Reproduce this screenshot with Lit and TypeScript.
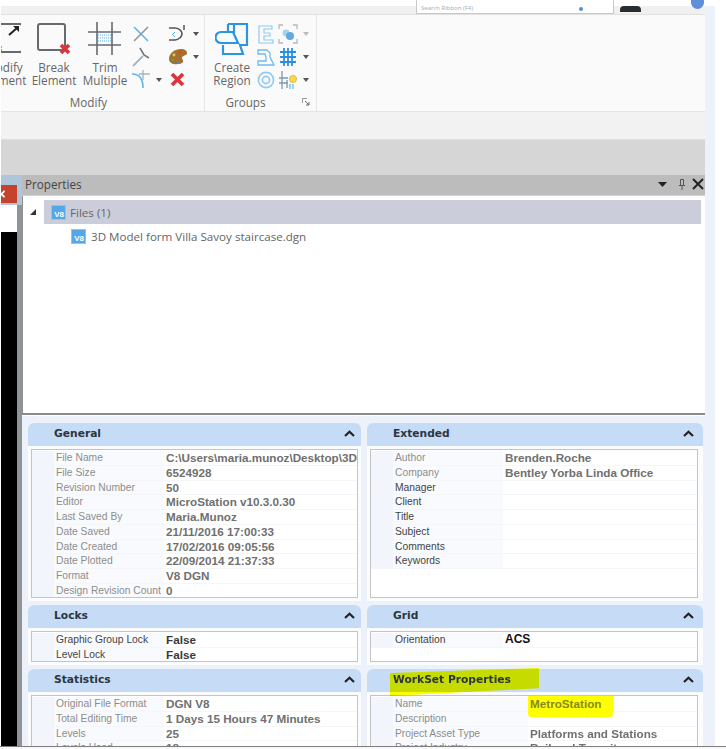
import { LitElement, html, css, svg } from "lit";
import { customElement } from "lit/decorators.js";

const blue = "#5fb4ec";
const gray = "#666b70";
const red = "#d9363e";

const redX = (x: number, y: number, s: number) => svg`<path d="M${x} ${y}l${s} ${s}M${x + s} ${y}l${-s} ${s}" stroke=${red} stroke-width="3.800" fill="none"/>`;

const icons: Record<string, any> = {
  modify: svg`<svg width="33" height="33" viewBox="0 0 33 33"><rect x="9" y="2" width="25" height="28" rx="2" fill="none" stroke=${gray} stroke-width="2"/><path d="M21 13l8-7" stroke="#222" stroke-width="2" fill="none"/><path d="M25 4h6v6z" fill="#222"/><path d="M11 17v14M13 24v6" stroke=${blue} stroke-width="2" stroke-dasharray="2 1" fill="none"/></svg>`,
  brk: svg`<svg width="34" height="34" viewBox="0 0 34 34" overflow="visible"><rect x="1" y="2" width="27" height="26" rx="2" fill="none" stroke=${gray} stroke-width="2"/>${redX(24, 23, 8)}</svg>`,
  trim: svg`<svg width="34" height="34" viewBox="0 0 34 34"><path d="M9 0v33M24 0v33M0 10h33M0 23h33" stroke=${gray} stroke-width="1.6" fill="none"/><path d="M10 13h14M10 16h14M10 19h14" stroke=${blue} stroke-width="1" stroke-dasharray="1 1" fill="none"/></svg>`,
  x: svg`<svg width="20" height="20" viewBox="0 0 20 20"><path d="M3 3l14 14" stroke=${blue} stroke-width="1.6"/><path d="M17 3L3 17" stroke="#8a98a5" stroke-width="1.6"/></svg>`,
  y: svg`<svg width="20" height="20" viewBox="0 0 20 20"><path d="M9 1l4 7 5 3" stroke="#777" stroke-width="1.6" fill="none"/><path d="M12 9L2 19" stroke="#9fb6c8" stroke-width="1.8"/></svg>`,
  curve: svg`<svg width="20" height="20" viewBox="0 0 20 20"><path d="M1 4c7 0 11 4 11 14" stroke=${blue} stroke-width="1.6" fill="none"/><path d="M12 0v10M8 4h11" stroke="#a9b2ba" stroke-width="1.3" fill="none"/></svg>`,
  arc: svg`<svg width="20" height="20" viewBox="0 0 20 20"><path d="M1 4h6c5 0 7 4 7 6s-3 6-7 6H1" stroke="#555" stroke-width="1.6" fill="none"/><path d="M7 8l-3 3M7 13l-3-3" stroke=${blue} stroke-width="1"/><path d="M16 1v5" stroke="#555" stroke-width="1.5"/></svg>`,
  palette: svg`<svg width="20" height="20" viewBox="0 0 20 20"><path d="M1 12C1 6 7 2 13 2c4 0 6 2 6 4 0 3-5 2-5 5 0 2 2 2 1 4-2 3-14 4-14-3z" fill="#a5702e"/><circle cx="12" cy="5" r="1.4" fill="#d8453d"/><circle cx="6" cy="8" r="1.4" fill="#e9c94e"/><circle cx="5" cy="13" r="1.4" fill="#58a45c"/><circle cx="10" cy="15" r="1.3" fill="#4b8ad0"/></svg>`,
  xred: svg`<svg width="20" height="20" viewBox="0 0 20 20">${redX(4, 4, 11)}</svg>`,
  region: svg`<svg width="34" height="34" viewBox="0 0 34 34"><path d="M13 2h19v21h-7l3 9H8v-9" fill="none" stroke="#2b95e2" stroke-width="2.2"/><path d="M19 2v8H6a5 5 0 0 0 0 11h17l-5-11" fill="none" stroke="#2b95e2" stroke-width="2.2"/><path d="M13 2v8" fill="none" stroke="#2b95e2" stroke-width="2.2"/></svg>`,
  g1: svg`<svg width="20" height="20" viewBox="0 0 20 20"><path d="M3 2h13v3H8v4h6v3H8v4h9v3H3z" fill="none" stroke="#8ecbf3" stroke-width="1.2"/></svg>`,
  g2: svg`<svg width="20" height="20" viewBox="0 0 20 20"><path d="M2 3h9l3 3v4l4 8H2v-4h8v-4l-1-3H2z" fill="none" stroke="#6dbcef" stroke-width="1.3"/></svg>`,
  g3: svg`<svg width="20" height="20" viewBox="0 0 20 20"><circle cx="10" cy="10" r="7.6" fill="none" stroke="#8ecbf3" stroke-width="1.6"/><circle cx="10" cy="10" r="3.6" fill="none" stroke="#8ecbf3" stroke-width="1.6"/></svg>`,
  h1: svg`<svg width="20" height="20" viewBox="0 0 20 20"><path d="M1 5V1h4M15 1h4v4M19 15v4h-4M5 19H1v-4" stroke="#b5b8bb" stroke-width="1.3" fill="none"/><circle cx="8" cy="9" r="3.4" fill="#a6d2f2"/><circle cx="12" cy="12" r="4" fill="#62a9e2"/></svg>`,
  h2: svg`<svg width="20" height="20" viewBox="0 0 20 20"><path d="M6 1v18M10 1v18M14 1v18M2 5h16M2 10h16M2 15h16" stroke="#2b8fe0" stroke-width="1.8" fill="none"/></svg>`,
  h3: svg`<svg width="20" height="20" viewBox="0 0 20 20"><path d="M4 1v18M1 8h9M1 13h9M9 10v8" stroke="#7f9aaf" stroke-width="1.3" fill="none"/><path d="M12 14v5M15 14v5" stroke=${blue} stroke-width="1.2"/><circle cx="15" cy="9" r="3.6" fill="#f5d94e" stroke="#c9b13a" stroke-width=".7"/></svg>`,
};

const chevron = svg`<svg class="chev" width="11" height="7" viewBox="0 0 11 7"><path d="M1 6l4.500-4.300L10 6" fill="none" stroke="#222" stroke-width="2.200"/></svg>`;
const caret = (c = "#555") => svg`<svg class="caret" width="6" height="4" viewBox="0 0 6 4"><path d="M0 0h6L3 4z" fill=${c}/></svg>`;

type Row = [string, string, string?];

const general: Row[] = [
  ["File Name", "C:\\Users\\maria.munoz\\Desktop\\3D Model form Villa Savoy staircase.dgn"],
  ["File Size", "6524928"],
  ["Revision Number", "50"],
  ["Editor", "MicroStation v10.3.0.30"],
  ["Last Saved By", "Maria.Munoz"],
  ["Date Saved", "21/11/2016 17:00:33"],
  ["Date Created", "17/02/2016 09:05:56"],
  ["Date Plotted", "22/09/2014 21:37:33"],
  ["Format", "V8 DGN"],
  ["Design Revision Count", "0"],
];
const extended: Row[] = [
  ["Author", "Brenden.Roche"],
  ["Company", "Bentley Yorba Linda Office"],
  ["Manager", "", "ed"],
  ["Client", "", "ed"],
  ["Title", "", "ed"],
  ["Subject", "", "ed"],
  ["Comments", "", "ed"],
  ["Keywords", "", "ed"],
];
const locks: Row[] = [
  ["Graphic Group Lock", "False", "ed"],
  ["Level Lock", "False", "ed"],
];
const grid: Row[] = [["Orientation", "ACS", "ed"]];
const stats: Row[] = [
  ["Original File Format", "DGN V8"],
  ["Total Editing Time", "1 Days 15 Hours 47 Minutes"],
  ["Levels", "25"],
  ["Levels Used", "18"],
];
const workset: Row[] = [
  ["Name", "MetroStation", "mark"],
  ["Description", ""],
  ["Project Asset Type", "Platforms and Stations"],
  ["Project Industry", "Rail and Transit"],
];

@customElement("app-root")
export class AppRoot extends LitElement {
  static styles = css`
    :host { display: block; width: 726px; height: 749px; background: #fff; overflow: hidden; }
    * { box-sizing: border-box; }
    .root { width: 726px; height: 749px; display: flex; flex-direction: column; filter: blur(0.6px); font-family: "Open Sans", sans-serif; }
    .main { height: 746px; display: flex; overflow: hidden; padding-left: 1px; }
    .foot { height: 3px; border-top: 1px solid #7e7e7e; background: #f8f8f8; }
    .app { width: 704px; display: flex; flex-direction: column; flex: none; }
    .strip { width: 10px; margin-top: 6px; background: #edf1f9; flex: none; }

    .top { height: 15px; border-top: 6px solid #fff; border-bottom: 1px solid #e1e1e1; background: #f0f0f0; display: flex; align-items: flex-end; padding-left: 415px; }
    .search { width: 198px; height: 14px; margin-top: -6px; background: #fff; border: 1px solid #c8c8c8; border-top: 0; display: flex; align-items: flex-end; justify-content: space-between; padding: 0 30px 2px 4px; font-size: 6px; line-height: 6px; color: #aaa; white-space: nowrap; }
    .search i { width: 4px; height: 4px; background: #4f93dd; border-radius: 50%; }
    .black { width: 21px; height: 6px; background: #2a2d30; border-radius: 4px 4px 0 0; margin: 0 0 2px 6px; }
    .dot { width: 13px; height: 9px; background: #5f8fdc; border-radius: 0 0 7px 7px; margin: 0 0 5px 50px; }

    .ribbon { height: 97px; background: #fafafa; border-bottom: 1px solid #e4e4e4; display: flex; overflow: hidden; color: #666; }
    .group { display: flex; flex-direction: column; border-right: 1px solid #e6e6e6; flex: none; }
    .g-mod { width: 204px; }
    .g-grp { width: 112px; }
    .tools { flex: 1; display: flex; padding-top: 7px; min-height: 0; }
    .btn { width: 50px; flex: none; display: flex; flex-direction: column; align-items: center; font-size: 11.700px; line-height: 13px; text-align: center; white-space: nowrap; }
    .btn .ic { height: 39px; flex: none; }
    .btn svg { display: block; }
    .first { margin-left: -22px; }
    .col { display: grid; grid-template-rows: repeat(3, 23px); flex: none; }
    .cell { display: flex; align-items: center; gap: 5px; height: 23px; }
    .cell svg { display: block; flex: none; }
    .c1 { width: 37px; margin-left: 1px; }
    .c2 { width: 36px; }
    .c3 { width: 22px; margin-left: -1px; }
    .c4 { width: 30px; }
    .glabel { height: 16px; display: flex; align-items: center; font-size: 11.700px; line-height: 14px; padding-bottom: 2px; color: #666; }
    .glabel span { flex: 1; text-align: center; }
    .g-mod .glabel { padding-right: 28px; }
    .g-grp .glabel span { padding-right: 16px; }
    .g-grp .btn { margin-left: 2px; }
    .trimb { margin-left: 1px; }
    .launch { margin-right: 6px; }

    .band1 { height: 28px; background: #f2f2f2; border-bottom: 1px solid #dfdfdf; flex: none; }
    .band2 { height: 35px; background: #d6d6d6; flex: none; }

    .work { flex: 1; display: flex; min-height: 0; }
    .side { width: 21px; flex: none; display: flex; flex-direction: column; }
    .tile { height: 30px; background: #b0c5da; padding-top: 10px; flex: none; }
    .close { height: 18px; width: 16px; background: #c5432e; overflow: hidden; color: #fff; font: bold 15px/18px "Liberation Sans", sans-serif; }
    .close span { display: block; margin-left: -4px; }
    .sidebody { flex: 1; display: flex; flex-direction: column; border-right: 5px solid #8f9496; }
    .wh { height: 27px; background: #fff; flex: none; }
    .bk { flex: 1; background: #000; }

    .panel { flex: 1; display: flex; flex-direction: column; min-width: 0; background: #fff; }
    .title { height: 21px; flex: none; background: #bcbcbc; border-bottom: 1px solid #d2d2d2; display: flex; align-items: center; font-size: 11.700px; color: #444; padding: 0 1px 2px 3px; }
    .title span { flex: 1; }
    .tbtns { display: flex; align-items: center; gap: 7px; }
    .tbtns svg:first-child { margin-right: 5px; }
    .tree { height: 219px; flex: none; border-left: 1px solid #909090; padding-top: 4px; border-bottom: 2px solid #8a8a8a; font-size: 11.600px; color: #666; }
    .trow { height: 24px; display: flex; align-items: center; }
    .tri { width: 21px; padding-left: 7px; display: flex; flex: none; }
    .sel { width: 657px; background: #cbcdda; height: 24px; display: flex; align-items: center; padding-left: 7px; gap: 4px; }
    .v8 { width: 15px; height: 15px; background: #55a7e8; color: #fff; font: bold 8px/9px "Liberation Sans", sans-serif; display: flex; align-items: flex-end; justify-content: flex-end; padding-right: 1px; flex: none; border: 1px solid #8cc7f2; }
    .file { padding-left: 48px; gap: 5px; height: 25px; }

    .details { flex: 1; min-height: 0; overflow: hidden; background: #edf1f9; border-top: 1px solid #fff; padding: 7px 0 0 6px; display: grid; grid-template-columns: 333px 336px; column-gap: 6px; grid-template-rows: 178px 60px 200px; row-gap: 4px; }
    .card { background: #fbfcfe; border-radius: 6px 6px 0 0; display: flex; flex-direction: column; min-height: 0; }
    .head { height: 23px; flex: none; background: #c6dcf6; border-radius: 6px 6px 0 0; display: flex; align-items: center; justify-content: space-between; padding: 0 9px 2px 26px; font: bold 10.700px "DejaVu Sans", sans-serif; color: #2c3540; position: relative; }
    .card:nth-child(odd) .head { padding-right: 6px; }
    .head span { position: relative; }
    .hl { position: absolute; left: 23px; top: -1px; width: 149px; height: 28px; background: #ff0; mix-blend-mode: multiply; clip-path: polygon(0 18%, 100% 0, 100% 72%, 0 100%); }
    .box { flex: 1; margin: 3px 5px 3px 3px; background: #fff; border: 1px solid #c4c4c4; padding-top: 1px; min-height: 0; overflow: hidden; }
    .card:nth-child(odd) .box { margin-right: 3px; }
    .row { display: flex; height: 14.750px; font: 10.300px/14px "Liberation Sans", sans-serif; color: #8d8d8d; border-bottom: 1px solid #f5f6f9; padding-left: 22px; background: linear-gradient(90deg, #f2f5fb 22px, transparent 22px); white-space: nowrap; }
    .lab { width: 110px; flex: none; padding-left: 2px; background: #f9fafd; overflow: hidden; }
    .long .lab { width: 135px; }
    .row.ed { color: #444; }
    .val { flex: 1; min-width: 0; overflow: hidden; padding-left: 2px; font-weight: bold; color: #707070; font-size: 11.700px; line-height: 13px; position: relative; }
    .row.ed .val { color: #3a3a3a; }
    .row.mark .val { overflow: visible; }
    .row.mark .val span { position: relative; color: #858a20; }
    .row.mark .val::before { content: ""; position: absolute; left: 0; top: -4px; width: 85px; height: 24px; background: #ff0; border-radius: 3px; }
    .acs { color: #111 !important; font-size: 12px; }
    .chev { display: block; }
  `;

  private rows(rows: Row[]) {
    return rows.map(
      ([l, v, c]) => html`<div class="row ${c ?? ""}"><div class="lab">${l}</div><div class="val ${v === "ACS" ? "acs" : ""}"><span>${v}</span></div></div>`
    );
  }

  private card(title: string, rows: Row[], hl = false) {
    return html`<section class="card ${hl ? "long" : ""}">
      <div class="head">${hl ? html`<i class="hl"></i>` : ""}<span>${title}</span>${chevron}</div>
      <div class="box">${this.rows(rows)}</div>
    </section>`;
  }

  render() {
    return html`<div class="root">
      <div class="main">
        <div class="app">
          <div class="top">
            <div class="search"><span>Search Ribbon (F4)</span><i></i></div>
            <div class="black"></div>
            <div class="dot"></div>
          </div>
          <div class="ribbon">
            <div class="group g-mod">
              <div class="tools">
                <div class="btn first"><div class="ic">${icons.modify}</div>Modify<br />Element</div>
                <div class="btn"><div class="ic">${icons.brk}</div>Break<br />Element</div>
                <div class="btn trimb"><div class="ic">${icons.trim}</div>Trim<br />Multiple</div>
                <div class="col c1">
                  <div class="cell">${icons.x}</div>
                  <div class="cell">${icons.y}</div>
                  <div class="cell">${icons.curve}${caret()}</div>
                </div>
                <div class="col c2">
                  <div class="cell">${icons.arc}${caret()}</div>
                  <div class="cell">${icons.palette}${caret()}</div>
                  <div class="cell">${icons.xred}</div>
                </div>
              </div>
              <div class="glabel"><span>Modify</span></div>
            </div>
            <div class="group g-grp">
              <div class="tools">
                <div class="btn"><div class="ic">${icons.region}</div>Create<br />Region</div>
                <div class="col c3">
                  <div class="cell">${icons.g1}</div>
                  <div class="cell">${icons.g2}</div>
                  <div class="cell">${icons.g3}</div>
                </div>
                <div class="col c4">
                  <div class="cell">${icons.h1}${caret("#bbb")}</div>
                  <div class="cell">${icons.h2}${caret()}</div>
                  <div class="cell">${icons.h3}${caret()}</div>
                </div>
              </div>
              <div class="glabel"><span>Groups</span>
                <svg class="launch" width="8" height="8" viewBox="0 0 8 8"><path d="M.5 5V.5H5" fill="none" stroke="#999"/><path d="M3 3l4 4M4 7h3V4" stroke="#666" fill="none"/></svg>
              </div>
            </div>
          </div>
          <div class="band1"></div>
          <div class="band2"></div>
          <div class="work">
            <div class="side">
              <div class="tile"><div class="close"><span>×</span></div></div>
              <div class="sidebody"><div class="wh"></div><div class="bk"></div></div>
            </div>
            <div class="panel">
              <div class="title">
                <span>Properties</span>
                <div class="tbtns">
                  <svg width="9" height="5" viewBox="0 0 9 5"><path d="M0 0h9L4.500 5z" fill="#222"/></svg>
                  <svg width="6" height="11" viewBox="0 0 6 11"><path d="M1.500.5h3v6h-3zM0 6.500h6M3 7v4" fill="none" stroke="#555"/></svg>
                  <svg width="12" height="12" viewBox="0 0 12 12"><path d="M1 1l10 10M11 1L1 11" stroke="#222" stroke-width="2"/></svg>
                </div>
              </div>
              <div class="tree">
                <div class="trow">
                  <div class="tri"><svg width="6" height="6" viewBox="0 0 6 6"><path d="M6 0v6H0z" fill="#333"/></svg></div>
                  <div class="sel"><div class="v8">V8</div>Files (1)</div>
                </div>
                <div class="trow file"><div class="v8">V8</div>3D Model form Villa Savoy staircase.dgn</div>
              </div>
              <div class="details">
                ${this.card("General", general)} ${this.card("Extended", extended)}
                ${this.card("Locks", locks)} ${this.card("Grid", grid)}
                ${this.card("Statistics", stats)} ${this.card("WorkSet Properties", workset, true)}
              </div>
            </div>
          </div>
        </div>
        <div class="strip"></div>
      </div>
      <div class="foot"></div>
    </div>`;
  }
}
